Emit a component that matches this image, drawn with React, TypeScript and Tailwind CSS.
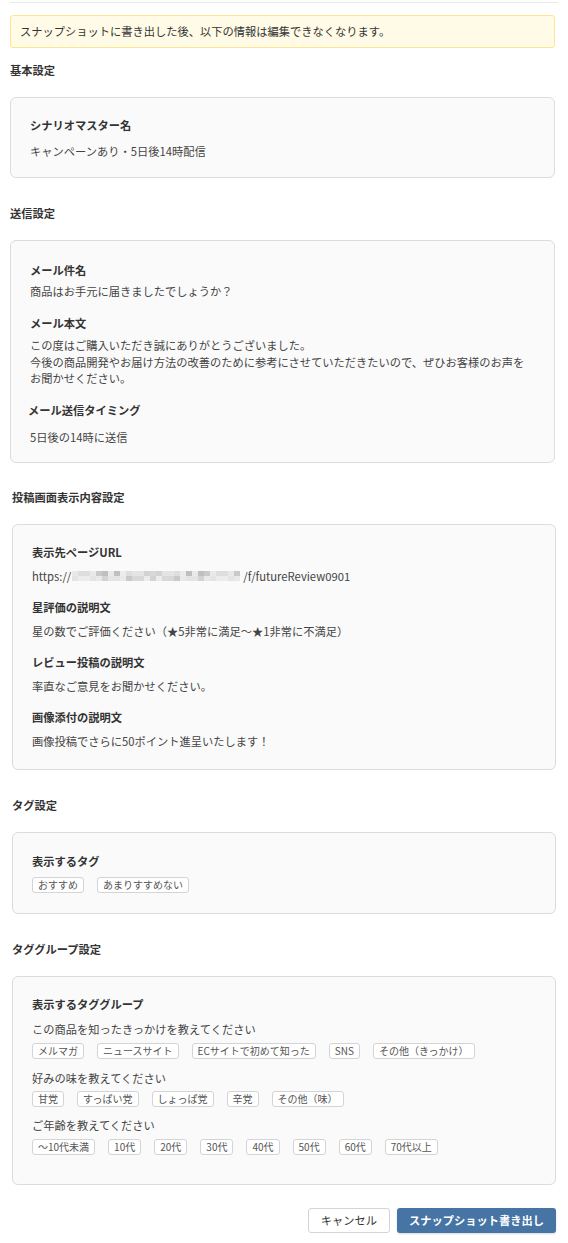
import React from "react";

const FONT = "font-['Noto_Sans_CJK_JP','Noto_Sans',sans-serif]";

// pixelated (mosaic) part of the URL, drawn as blocks
const SHADES = ["#e9e9e9", "#dedede", "#d3d3d3", "#e4e4e4", "#c9c9c9", "#ececec", "#d8d8d8", "#bfbfbf"];
const cells: { x: number; y: number; c: string }[] = [];
for (let col = 0; col < 28; col++) {
  for (let row = 0; row < 2; row++) {
    const n = (col * 37 + row * 11 + col * col * 3) % 23;
    cells.push({ x: col * 6, y: row * 5, c: SHADES[n % SHADES.length] });
  }
}

const Mosaic = () => (
  <svg width="170" height="12" viewBox="0 0 170 12" className="inline-block align-[-1px] mx-[1px]">
    {cells.map((b, i) => (
      <rect key={i} x={b.x} y={b.y + 1} width="6" height="5" fill={b.c} />
    ))}
  </svg>
);

const SectionTitle = ({ children }: { children: React.ReactNode }) => (
  <h2 className="text-[11.25px] leading-[16px] font-bold text-[#333] mb-[19px]">{children}</h2>
);

const Card = ({ children, className = "" }: { children: React.ReactNode; className?: string }) => (
  <div className={`bg-[#fafafa] border border-[#dcdcdc] rounded-[6px] px-[19px] ${className}`}>{children}</div>
);

const Label = ({ children, className = "" }: { children: React.ReactNode; className?: string }) => (
  <div className={`text-[11.25px] leading-[18px] font-bold text-[#333] ${className}`}>{children}</div>
);

const Text = ({ children, className = "" }: { children: React.ReactNode; className?: string }) => (
  <div className={`text-[11.25px] leading-[18px] text-[#444] ${className}`}>{children}</div>
);

const Tag = ({ children }: { children: React.ReactNode }) => (
  <span className="inline-flex items-center h-[16px] px-[5px] border border-[#d4d4d4] bg-white rounded-[3px] text-[10px] leading-none text-[#555] whitespace-nowrap">
    {children}
  </span>
);

const TagRow = ({ tags, className = "" }: { tags: string[]; className?: string }) => (
  <div className={`flex flex-wrap gap-[13px] ${className}`}>
    {tags.map((t) => (
      <Tag key={t}>{t}</Tag>
    ))}
  </div>
);

export default function App() {
  return (
    <div className={`w-[568px] min-h-[1243px] bg-white pt-[2px] ${FONT}`}>
      <div className="ml-[10px] w-[548px] border-t border-[#e8e8e8]" />

      {/* upper sections */}
      <div className="ml-[10px] w-[545px]">
        <div className="mt-[12px] bg-[#fffbe6] border border-[#ffe58f] rounded-[3px] pl-[9px] py-[7px] text-[11.25px] leading-[17px] text-[#333]">
          スナップショットに書き出した後、以下の情報は編集できなくなります。
        </div>

        <div className="mt-[14px]">
          <SectionTitle>基本設定</SectionTitle>
          <Card className="pt-[18px] pb-[17px]">
            <Label>シナリオマスター名</Label>
            <Text className="mt-[8px]">キャンペーンあり・5日後14時配信</Text>
          </Card>
        </div>

        <div className="mt-[27px]">
          <SectionTitle>送信設定</SectionTitle>
          <Card className="pt-[20px] pb-[16px]">
            <Label>メール件名</Label>
            <Text className="mt-[3px]">商品はお手元に届きましたでしょうか？</Text>
            <Label className="mt-[14px]">メール本文</Label>
            <div className="mt-[5px] text-[11.25px] leading-[16.5px] text-[#444]">
              この度はご購入いただき誠にありがとうございました。
              <br />
              今後の商品開発やお届け方法の改善のために参考にさせていただきたいので、ぜひお客様のお声を
              <br />
              お聞かせください。
            </div>
            <Label className="mt-[14px] -ml-[2px]">メール送信タイミング</Label>
            <Text className="mt-[9px]">5日後の14時に送信</Text>
          </Card>
        </div>
      </div>

      {/* lower sections */}
      <div className="ml-[12px] w-[544px]">
        <div className="mt-[26px]">
          <SectionTitle>投稿画面表示内容設定</SectionTitle>
          <Card className="pt-[18px] pb-[19px]">
            <Label>表示先ページURL</Label>
            <Text className="mt-[6px]">
              https://
              <Mosaic />
              /f/futureReview0901
            </Text>
            <Label className="mt-[13px]">星評価の説明文</Label>
            <Text className="mt-[6px]">星の数でご評価ください（★5非常に満足～★1非常に不満足）</Text>
            <Label className="mt-[13px]">レビュー投稿の説明文</Label>
            <Text className="mt-[6px]">率直なご意見をお聞かせください。</Text>
            <Label className="mt-[13px]">画像添付の説明文</Label>
            <Text className="mt-[6px]">画像投稿でさらに50ポイント進呈いたします！</Text>
          </Card>
        </div>

        <div className="mt-[27px]">
          <SectionTitle>タグ設定</SectionTitle>
          <Card className="pt-[19px] pb-[20px]">
            <Label>表示するタグ</Label>
            <TagRow className="mt-[7px]" tags={["おすすめ", "あまりすすめない"]} />
          </Card>
        </div>

        <div className="mt-[27px]">
          <SectionTitle>タググループ設定</SectionTitle>
          <Card className="pt-[18px] pb-[29px]">
            <Label>表示するタググループ</Label>
            <Text className="mt-[7px]">この商品を知ったきっかけを教えてください</Text>
            <TagRow
              className="mt-[5px]"
              tags={["メルマガ", "ニュースサイト", "ECサイトで初めて知った", "SNS", "その他（きっかけ）"]}
            />
            <Text className="mt-[10px]">好みの味を教えてください</Text>
            <TagRow className="mt-[4px]" tags={["甘党", "すっぱい党", "しょっぱ党", "辛党", "その他（味）"]} />
            <Text className="mt-[9px]">ご年齢を教えてください</Text>
            <TagRow
              className="mt-[5px]"
              tags={["～10代未満", "10代", "20代", "30代", "40代", "50代", "60代", "70代以上"]}
            />
          </Card>
        </div>

        <div className="mt-[23px] flex justify-end gap-[7px]">
          <button className="h-[25px] px-[12px] border border-[#d4d4d4] bg-white rounded-[3px] text-[11.25px] text-[#333]">
            キャンセル
          </button>
          <button className="h-[25px] px-[12px] bg-[#4674a5] rounded-[3px] text-[11.25px] font-bold text-white shadow-[0_1px_2px_rgba(0,0,0,0.15)]">
            スナップショット書き出し
          </button>
        </div>
      </div>
    </div>
  );
}
